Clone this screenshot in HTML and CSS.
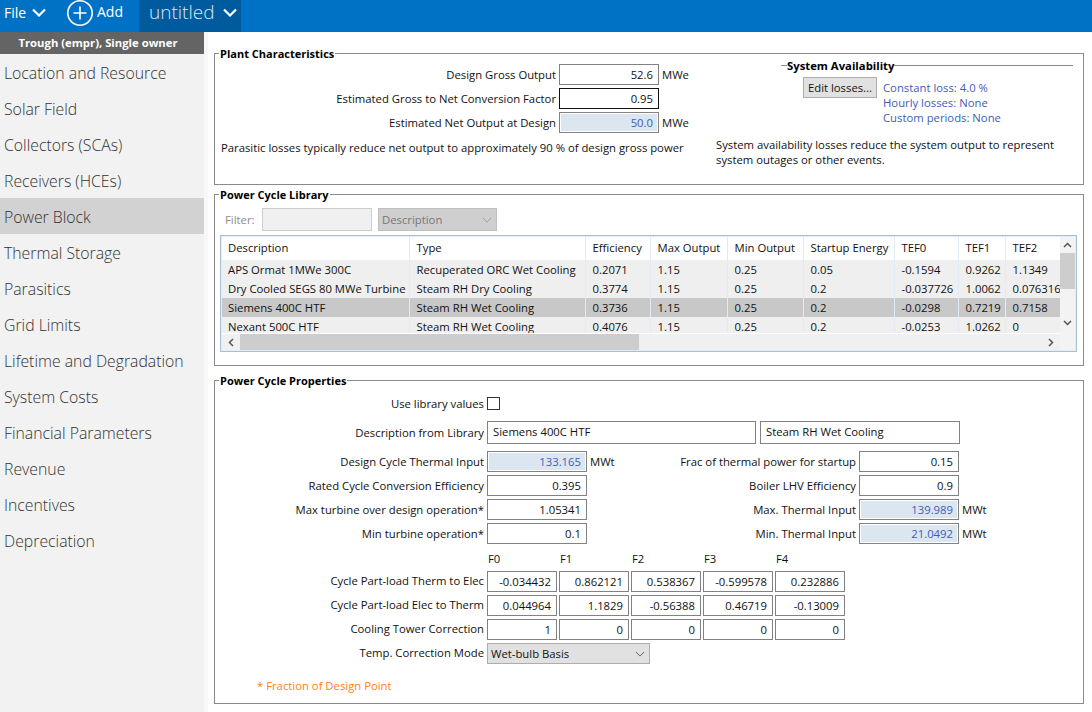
FILE: index.html
```html
<!DOCTYPE html>
<html lang="en">
<head>
<meta charset="utf-8">
<title>Power Block</title>
<link rel="stylesheet" href="styles.css">
</head>
<body>
<header class="topbar">
  <div class="menu-file">File
    <svg class="chev" width="14" height="9" viewBox="0 0 14 9"><path d="M1 1.5l6 6 6-6" fill="none" stroke="#fff" stroke-width="2.2"/></svg>
  </div>
  <div class="menu-add">
    <svg class="add-icon" width="28" height="28" viewBox="0 0 28 28"><circle cx="14" cy="13" r="12.2" fill="none" stroke="#fff" stroke-width="1.6"/><path d="M14 6.5v13M7.5 13h13" fill="none" stroke="#fff" stroke-width="1.6"/></svg>
    <span>Add</span>
  </div>
  <div class="tab">untitled
    <svg class="chev" width="14" height="9" viewBox="0 0 14 9"><path d="M1 1.5l6 6 6-6" fill="none" stroke="#fff" stroke-width="2.2"/></svg>
  </div>
</header>
<div class="app">
  <nav class="sidebar">
    <div class="config">Trough (empr), Single owner</div>
    <ul class="nav">
      <li>Location and Resource</li>
      <li>Solar Field</li>
      <li>Collectors (SCAs)</li>
      <li>Receivers (HCEs)</li>
      <li class="active">Power Block</li>
      <li>Thermal Storage</li>
      <li>Parasitics</li>
      <li>Grid Limits</li>
      <li>Lifetime and Degradation</li>
      <li>System Costs</li>
      <li>Financial Parameters</li>
      <li>Revenue</li>
      <li>Incentives</li>
      <li>Depreciation</li>
    </ul>
  </nav>
  <main class="main">
    <section class="group group-plant">
      <h2 class="group-title">Plant Characteristics</h2>
      <div class="plant-left">
        <div class="row"><span class="label label-plant">Design Gross Output</span><span class="field w100">52.6</span><span class="unit">MWe</span></div>
        <div class="row"><span class="label label-plant">Estimated Gross to Net Conversion Factor</span><span class="field w100 focus">0.95</span></div>
        <div class="row"><span class="label label-plant">Estimated Net Output at Design</span><span class="field w100 calc">50.0</span><span class="unit">MWe</span></div>
        <p class="note">Parasitic losses typically reduce net output to approximately 90 % of design gross power</p>
      </div>
      <div class="plant-right">
        <div class="avail-title"><i class="dash"></i><strong>System Availability</strong><i class="rule"></i></div>
        <div class="avail-body">
          <span class="button">Edit losses...</span>
          <div class="links">
            <div>Constant loss: 4.0 %</div>
            <div>Hourly losses: None</div>
            <div>Custom periods: None</div>
          </div>
        </div>
        <p class="avail-note">System availability losses reduce the system output to represent<br>system outages or other events.</p>
      </div>
    </section>

    <section class="group group-lib">
      <h2 class="group-title">Power Cycle Library</h2>
      <div class="filter">
        <span class="filter-label">Filter:</span>
        <span class="filter-input"></span>
        <span class="filter-select">Description
          <svg width="10" height="6" viewBox="0 0 12 7"><path d="M1 1l5 5 5-5" fill="none" stroke="#a0a0a0" stroke-width="1.2"/></svg>
        </span>
      </div>
      <div class="lib-box">
        <div class="lib-clip">
          <table class="lib-table">
            <colgroup>
              <col class="c1"><col class="c2"><col class="c3"><col class="c4"><col class="c5"><col class="c6"><col class="c7"><col class="c8"><col class="c9">
            </colgroup>
            <thead>
              <tr><th>Description</th><th>Type</th><th>Efficiency</th><th>Max Output</th><th>Min Output</th><th>Startup Energy</th><th>TEF0</th><th>TEF1</th><th>TEF2</th></tr>
            </thead>
            <tbody>
              <tr><td>APS Ormat 1MWe 300C</td><td>Recuperated ORC Wet Cooling</td><td>0.2071</td><td>1.15</td><td>0.25</td><td>0.05</td><td>-0.1594</td><td>0.9262</td><td>1.1349</td></tr>
              <tr><td>Dry Cooled SEGS 80 MWe Turbine</td><td>Steam RH Dry Cooling</td><td>0.3774</td><td>1.15</td><td>0.25</td><td>0.2</td><td>-0.037726</td><td>1.0062</td><td>0.076316</td></tr>
              <tr class="selected"><td>Siemens 400C HTF</td><td>Steam RH Wet Cooling</td><td>0.3736</td><td>1.15</td><td>0.25</td><td>0.2</td><td>-0.0298</td><td>0.7219</td><td>0.7158</td></tr>
              <tr><td>Nexant 500C HTF</td><td>Steam RH Wet Cooling</td><td>0.4076</td><td>1.15</td><td>0.25</td><td>0.2</td><td>-0.0253</td><td>1.0262</td><td>0</td></tr>
            </tbody>
          </table>
        </div>
        <div class="vscroll">
          <svg width="9" height="6" viewBox="0 0 9 6"><path d="M1 5l3.5-3.5L8 5" fill="none" stroke="#555" stroke-width="1.5"/></svg>
          <div class="vtrack"><div class="vthumb"></div></div>
          <svg width="9" height="6" viewBox="0 0 9 6"><path d="M1 1l3.5 3.5L8 1" fill="none" stroke="#555" stroke-width="1.5"/></svg>
        </div>
        <div class="hscroll">
          <svg class="harrow" width="6" height="9" viewBox="0 0 6 9"><path d="M5 1L1.5 4.5 5 8" fill="none" stroke="#555" stroke-width="1.5"/></svg>
          <div class="htrack"><div class="hthumb"></div></div>
          <svg class="harrow" width="6" height="9" viewBox="0 0 6 9"><path d="M1 1l3.5 3.5L1 8" fill="none" stroke="#555" stroke-width="1.5"/></svg>
        </div>
      </div>
    </section>

    <section class="group group-props">
      <h2 class="group-title">Power Cycle Properties</h2>
      <div class="row row-check"><span class="label label-prop">Use library values</span><span class="checkbox"></span></div>
      <div class="row row-desc"><span class="label label-prop">Description from Library</span><span class="field wide1">Siemens 400C HTF</span><span class="field wide2">Steam RH Wet Cooling</span></div>
      <div class="two-col">
        <div class="stack">
          <div class="row"><span class="label label-prop">Design Cycle Thermal Input</span><span class="field w100 calc">133.165</span><span class="unit">MWt</span></div>
          <div class="row"><span class="label label-prop">Rated Cycle Conversion Efficiency</span><span class="field w100">0.395</span></div>
          <div class="row"><span class="label label-prop">Max turbine over design operation*</span><span class="field w100">1.05341</span></div>
          <div class="row"><span class="label label-prop">Min turbine operation*</span><span class="field w100">0.1</span></div>
        </div>
        <div class="stack stack-right">
          <div class="row"><span class="label label-right">Frac of thermal power for startup</span><span class="field w100">0.15</span></div>
          <div class="row"><span class="label label-right">Boiler LHV Efficiency</span><span class="field w100">0.9</span></div>
          <div class="row"><span class="label label-right">Max. Thermal Input</span><span class="field w100 calc">139.989</span><span class="unit">MWt</span></div>
          <div class="row"><span class="label label-right">Min. Thermal Input</span><span class="field w100 calc">21.0492</span><span class="unit">MWt</span></div>
        </div>
      </div>
      <div class="matrix-head"><span>F0</span><span>F1</span><span>F2</span><span>F3</span><span>F4</span></div>
      <div class="row row-m"><span class="label label-prop">Cycle Part-load Therm to Elec</span><span class="field w70">-0.034432</span><span class="field w70">0.862121</span><span class="field w70">0.538367</span><span class="field w70">-0.599578</span><span class="field w70">0.232886</span></div>
      <div class="row row-m"><span class="label label-prop">Cycle Part-load Elec to Therm</span><span class="field w70">0.044964</span><span class="field w70">1.1829</span><span class="field w70">-0.56388</span><span class="field w70">0.46719</span><span class="field w70">-0.13009</span></div>
      <div class="row row-m"><span class="label label-prop">Cooling Tower Correction</span><span class="field w70">1</span><span class="field w70">0</span><span class="field w70">0</span><span class="field w70">0</span><span class="field w70">0</span></div>
      <div class="row row-m"><span class="label label-prop">Temp. Correction Mode</span><span class="select">Wet-bulb Basis
        <svg width="10" height="6" viewBox="0 0 12 7"><path d="M1 1l5 5 5-5" fill="none" stroke="#555" stroke-width="1.1"/></svg>
      </span></div>
      <p class="footnote">* Fraction of Design Point</p>
    </section>
  </main>
</div>
</body>
</html>
```

FILE: styles.css
```css
* { box-sizing: border-box; }
html, body { margin: 0; padding: 0; height: 712px; overflow: hidden; background: #fff; }
body { font-family: "Open Sans", "Noto Sans", sans-serif; font-size: 11.3px; line-height: 15px; color: #111; }
p, h2, ul { margin: 0; padding: 0; }

.topbar { height: 32px; background: #0072c6; color: #fff; display: flex; align-items: stretch; overflow: hidden; }
.menu-file { width: 66px; padding: 0 0 7px 4px; display: flex; align-items: center; gap: 6px; font-size: 14px; }
.menu-add { width: 73px; display: flex; align-items: flex-start; font-size: 14px; }
.add-icon { display: block; flex: none; margin-right: 3px; }
.menu-add span { line-height: 24px; }
.tab { width: 102px; background: #005a9e; padding: 0 0 7px 10px; display: flex; align-items: center; gap: 9px; font-size: 19px; font-weight: 300; color: #dce9f5; }

.app { display: flex; height: 680px; }
.sidebar { width: 204px; background: #f2f2f2; flex: none; }
.config { height: 22px; background: #646464; color: #fff; font-weight: 700; text-align: center; line-height: 21px; font-size: 11.3px; padding-right: 8px; white-space: nowrap; }
.nav { list-style: none; }
.nav li { height: 36px; line-height: 39px; padding-left: 4px; font-size: 15.8px; font-weight: 300; color: #333; white-space: nowrap; }
.nav li.active { background: #d2d2d2; }

.main { flex: 1; border-left: 4px solid #f7f7f7; padding: 21px 8px 0 6px; min-width: 0; }

.group { position: relative; border: 1px solid #8a8a8a; }
.group-title { position: absolute; left: 4px; top: -8px; background: #fff; padding: 0 1px; font-size: 11px; font-weight: 700; line-height: 15px; color: #000; }
.group-plant { height: 132px; display: flex; margin-bottom: 9px; }
.group-lib { height: 172px; margin-bottom: 14px; padding: 13px 5px 0 5px; }
.group-props { height: 324px; padding-top: 16px; }

.row { display: flex; align-items: center; gap: 3px; height: 21px; }
.label { text-align: right; white-space: nowrap; flex: none; }
.field { flex: none; height: 21px; border: 1px solid #828282; background: #fff; line-height: 19px; text-align: right; padding: 0 5px; white-space: nowrap; overflow: hidden; }
.w100 { width: 100px; }
.w70 { width: 70px; margin-right: -1px; }
.focus { border-color: #111; }
.calc { background: #dce6f1; color: #3f5cb8; box-shadow: inset 0 0 0 1px #fff; }

.plant-left { width: 501px; flex: none; padding-top: 10px; display: flex; flex-direction: column; gap: 3px; }
.label-plant { width: 341px; }
.note { padding: 4px 0 0 6px; white-space: nowrap; }
.plant-right { flex: 1; padding-top: 3px; }
.avail-title { display: flex; align-items: center; margin-left: 65px; margin-right: 10px; height: 16px; color: #000; }
.avail-title strong { font-weight: 700; }
.dash { width: 6px; height: 1px; background: #8a8a8a; flex: none; }
.rule { flex: 1; height: 1px; background: #8a8a8a; }
.avail-body { display: flex; gap: 6px; margin: 4px 0 0 87px; }
.button { width: 74px; height: 21px; line-height: 19px; text-align: center; background: #e1e1e1; border: 1px solid #adadad; white-space: nowrap; }
.links { color: #3f5cb8; padding-top: 3px; }
.avail-note { margin-top: 12px; white-space: nowrap; }

.filter { display: flex; align-items: center; height: 23px; color: #8c8c8c; }
.filter-label { width: 42px; padding-left: 5px; }
.filter-input { width: 110px; height: 23px; background: #f0f0f0; border: 1px solid #cdcdcd; }
.filter-select { width: 119px; height: 23px; margin-left: 6px; background: #cfcfcf; border: 1px solid #c0c0c0; padding: 0 4px 0 3px; display: flex; align-items: center; justify-content: space-between; color: #777; }
.lib-box { margin-top: 4px; width: 857px; height: 117px; border: 1px solid #a9bfd6; box-shadow: inset 0 0 0 1px #e4ecf4; padding: 1px; display: grid; grid-template-columns: 838px 1fr; grid-template-rows: 96px 1fr; }
.lib-clip { overflow: hidden; }
.lib-table { table-layout: fixed; border-collapse: collapse; width: 838px; }
.c1 { width: 187px; } .c2 { width: 176px; } .c3 { width: 65px; } .c4 { width: 77px; } .c5 { width: 76px; } .c6 { width: 91px; } .c7 { width: 64px; } .c8 { width: 47px; } .c9 { width: 55px; }
.lib-table th, .lib-table td { font-weight: 400; text-align: left; white-space: nowrap; overflow: hidden; padding: 0 0 0 7px; border-right: 1px solid #e3eaf3; }
.lib-table th:first-child, .lib-table td:first-child { padding-left: 6px; }
.lib-table th { height: 23px; background: #fff; padding-bottom: 3px; }
.lib-table td { height: 19px; background: #efefef; }
.lib-table .selected td { background: #c8c8c8; }
.vscroll { grid-row: 1 / 3; grid-column: 2; background: #f3f3f3; display: flex; flex-direction: column; align-items: center; justify-content: space-between; padding: 5px 0 24px; }
.vtrack { flex: 1; width: 100%; margin-top: 5px; }
.vthumb { height: 36px; background: #cdcdcd; }
.hscroll { background: #f0f0f0; display: flex; align-items: center; margin-top: 1px; }
.harrow { flex: none; margin: 0 6px 0 6px; }
.htrack { flex: 1; height: 100%; }
.hthumb { width: 399px; height: 100%; background: #cdcdcd; }

.label-prop { width: 269px; }
.label-right { width: 241px; }
.row-check { height: 13px; }
.checkbox { width: 13px; height: 13px; border: 1px solid #333; background: #fff; flex: none; }
.row-desc { height: 23px; margin-top: 11px; }
.wide1 { width: 269px; height: 23px; text-align: left; margin-right: 1px; }
.wide2 { width: 200px; height: 23px; text-align: left; }
.two-col { display: flex; margin-top: 7px; }
.stack { display: flex; flex-direction: column; gap: 3px; width: 400px; }
.stack-right { width: auto; }
.matrix-head { display: flex; margin: 3px 0 0 273px; height: 24px; line-height: 24px; }
.matrix-head span { width: 72px; }
.row-m { margin-bottom: 3px; }
.row-m .label { padding-bottom: 2px; }
.select { width: 163px; height: 21px; background: #e1e1e1; border: 1px solid #adadad; padding: 0 4px 0 3px; display: flex; align-items: center; justify-content: space-between; }
.footnote { color: #ff8019; padding: 11px 0 0 42px; }
```
